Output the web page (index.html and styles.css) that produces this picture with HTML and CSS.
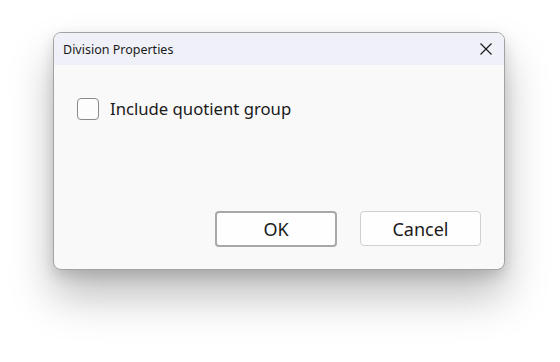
FILE: index.html
```html
<!DOCTYPE html>
<html lang="en">
<head>
  <meta charset="UTF-8" />
  <title>Division Properties</title>
  <link rel="stylesheet" href="styles.css">
</head>
<body>
  <div class="dialog">
    <div class="titlebar">
      <span class="title">Division Properties</span>
      <button class="close" aria-label="Close">
        <svg width="12" height="12" viewBox="0 0 12 12">
          <path d="M0.5 0.5 L11.5 11.5 M11.5 0.5 L0.5 11.5" stroke="#1a1a1a" stroke-width="1.2" fill="none"/>
        </svg>
      </button>
    </div>
    <div class="content">
      <label class="check-row">
        <span class="checkbox"></span>
        <span>Include quotient group</span>
      </label>
    </div>
    <div class="footer">
      <button class="btn default">OK</button>
      <button class="btn">Cancel</button>
    </div>
  </div>
</body>
</html>
```

FILE: styles.css
```css
html {
  background: #ffffff;
}

body {
  margin: 0;
  min-height: 362px;
  font-family: "Noto Sans", "Open Sans", sans-serif;
  color: #1a1a1a;
}

.dialog {
  margin: 32px 0 0 53px;
  width: 450px;
  height: 236px;
  border: 1px solid #a3a3a3;
  border-radius: 8px;
  background: #f9f9f9;
  box-shadow: 0 26px 44px rgba(0, 0, 0, 0.26), 0 6px 14px rgba(0, 0, 0, 0.14);
  display: flex;
  flex-direction: column;
  overflow: hidden;
}

.titlebar {
  height: 32px;
  background: #f0f1f8;
  display: flex;
  align-items: center;
  justify-content: space-between;
  padding: 0 12px 0 9px;
}

.title {
  font-size: 12.5px;
}

.close {
  border: none;
  background: none;
  padding: 0;
  width: 12px;
  height: 12px;
  display: flex;
}

.content {
  flex: 1;
  padding: 32px 0 0 23px;
}

.check-row {
  display: flex;
  align-items: center;
  gap: 11px;
  font-size: 16.7px;
}

.checkbox {
  width: 20px;
  height: 20px;
  border: 1px solid #8a8a8a;
  border-radius: 4px;
  background: #fdfdfd;
}

.footer {
  display: flex;
  justify-content: flex-end;
  gap: 23px;
  padding: 0 23px 22px 0;
}

.btn {
  width: 121px;
  height: 35px;
  border: 1px solid #d0d0d0;
  border-radius: 4px;
  background: #fefefe;
  font-family: inherit;
  font-size: 18px;
  color: #1a1a1a;
}

.btn.default {
  width: 122px;
  height: 36px;
  border: 2px solid #a8a8a8;
}
```
